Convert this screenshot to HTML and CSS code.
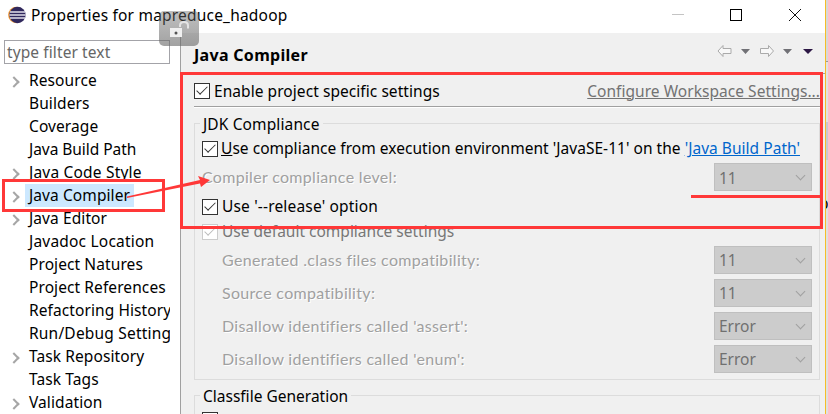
FILE: index.html
```html
<!DOCTYPE html>
<html lang="en">
<head>
<meta charset="utf-8">
<title>Properties for mapreduce_hadoop</title>
<link rel="stylesheet" href="styles.css">
</head>
<body>
<div class="screen">
  <div class="window">
    <header class="titlebar">
      <svg class="logo" width="18" height="18" viewBox="0 0 18 18"><circle cx="8.3" cy="9" r="8.2" fill="#f29a38"/><circle cx="9.5" cy="9" r="8.2" fill="#30285d"/><path d="M2 6h15M1.4 9h16.3M2 12h15" stroke="#e2e0ec" stroke-width="1.5"/></svg>
      <h1 class="title">Properties for mapreduce_hadoop</h1>
      <svg class="controls" width="136" height="14" viewBox="0 0 136 14" fill="none" shape-rendering="crispEdges"><path d="M2 6.5h12" stroke="#c4c4c4"/><path d="M60.500 1.500h11v11h-11z" stroke="#000"/><path d="M119 1l12 12M131 1l-12 12" stroke="#111" shape-rendering="auto"/></svg>
    </header>
    <div class="content">
      <aside class="sidebar">
        <div class="filter">type filter text</div>
        <ul class="tree">
          <li class="parent"><span>Resource</span></li>
          <li><span>Builders</span></li>
          <li><span>Coverage</span></li>
          <li><span class="tight">Java Build Path</span></li>
          <li class="parent"><span class="wide">Java Code Style</span></li>
          <li class="parent selected"><span>Java Compiler</span></li>
          <li class="parent"><span>Java Editor</span></li>
          <li><span class="wide">Javadoc Location</span></li>
          <li><span>Project Natures</span></li>
          <li><span>Project References</span></li>
          <li><span>Refactoring History</span></li>
          <li><span class="wide">Run/Debug Settings</span></li>
          <li class="parent"><span>Task Repository</span></li>
          <li><span>Task Tags</span></li>
          <li class="parent"><span>Validation</span></li>
        </ul>
      </aside>
      <main class="page">
        <div class="page-head">
          <h2>Java Compiler</h2>
          <svg width="98" height="14" viewBox="0 0 98 14"><g fill="#f8f8f8" stroke="#aaa"><path d="M1 7l5-5.500v3h8v5H6v3z"/><path d="M56.500 7l-5-5.500v3h-8v5h8v3z"/></g><path d="M24 5h9l-4.500 5zM66 5h9l-4.500 5z" fill="#717176"/><path d="M86 5h10l-5 5z" fill="#2c1744"/></svg>
        </div>
        <div class="enable-row">
          <i class="check"></i><span class="enable">Enable project specific settings</span>
          <a class="workspace">Configure Workspace Settings...</a>
        </div>
        <fieldset class="group jdk">
          <legend>JDK Compliance</legend>
          <div class="row env"><i class="check"></i><span class="env-text"><u>U</u>se compliance from execution environment 'JavaSE-11' on the <a>'Java Build Path'</a></span></div>
          <div class="row level"><span class="off">Compiler compliance level:</span><span class="combo">11</span></div>
          <div class="row release"><i class="check"></i><span class="release-text">Use '--release' option</span></div>
          <div class="row default"><i class="check disabled"></i><span class="default-text">Use default compliance settings</span></div>
          <div class="row sub"><span class="off">Generated .class files compatibility:</span><span class="combo">11</span></div>
          <div class="row sub"><span class="off">Source compatibility:</span><span class="combo">11</span></div>
          <div class="row sub"><span class="off">Disallow identifiers called 'assert':</span><span class="combo">Error</span></div>
          <div class="row sub"><span class="off">Disallow identifiers called 'enum':</span><span class="combo">Error</span></div>
        </fieldset>
        <fieldset class="group classfile">
          <legend>Classfile Generation</legend>
          <i class="check"></i>
        </fieldset>
      </main>
    </div>
  </div>
  <div class="behind"><span>p</span></div>
  <div class="lock"><svg width="40" height="35" viewBox="0 0 40 35"><path d="M11 17h12v9H11z" fill="#f0f0f0"/><path d="M21 16v-1.500q0-3.500 4-3.500t4 3.500v3" fill="none" stroke="#e4e4e4" stroke-width="2"/><circle cx="17" cy="22" r="1.500" fill="#555"/></svg></div>
  <svg class="marks" width="828" height="414" viewBox="0 0 828 414" fill="none" stroke="#ff3838" stroke-width="3"><path d="M181.500 73.500h640v154h-640zM691 196.500h130M3.500 180.500h160v30h-160z"/><path d="M127 196.600L200 180l-2-4 12 4-9 7-1-3.500L127 198z" fill="#ff3838" stroke="none"/></svg>
</div>
</body>
</html>
```
FILE: styles.css
```css
* { box-sizing: border-box; }
body { margin: 0; overflow: hidden; color: #000; font: 15.5px/23px "Noto Sans", "Open Sans", sans-serif; }
.screen { position: relative; display: flex; width: 828px; height: 414px; overflow: hidden; background: #fff; }
.window { width: 826px; height: 414px; border-right: 1px solid #f5bd28; flex: none; }
.titlebar { display: flex; align-items: center; height: 33px; padding: 0 19px 4px 8px; }
.logo { flex: none; margin-right: 5px; }
.title { margin: 0; padding-top: 1px; font-size: 15.5px; font-weight: 400; letter-spacing: .2px; white-space: nowrap; }
.controls { margin-left: auto; }
.content { display: flex; height: 381px; }
.sidebar { width: 181px; flex: none; border-right: 1px solid #a0a0a0; padding: 7px 10px 0 4px; }
.filter { height: 24px; border: 1px solid #a3a3a8; padding-left: 2px; color: #666; line-height: 23px; letter-spacing: .1px; white-space: nowrap; }
.tree { list-style: none; margin: 5px 0 0; padding: 0; width: 166px; letter-spacing: .09px; }
.tree li { display: flex; align-items: center; height: 23px; padding-left: 21px; overflow: hidden; white-space: nowrap; }
.tree li span { padding: 0 4px; line-height: 23px; height: 23px; }
.tree .wide { letter-spacing: .2px; }
.tree .tight { letter-spacing: -.05px; }
.parent::before { content: ""; box-sizing: border-box; flex: none; width: 8px; height: 8px; margin: 2px 4px 0 -12px; border: solid #a6a6a6; border-width: 2px 2px 0 0; transform: translateX(-3px) rotate(45deg); }
.tree .selected span { background: #cce8ff; width: 109px; }
.page { flex: 1; background: #f0f0f0; padding: 0 5px 0 13px; min-width: 0; }
.page-head { display: flex; align-items: center; justify-content: space-between; height: 41px; margin: 0 -5px 0 -13px; padding: 0 10px 0 13px; border-bottom: 1px solid #a0a0a0; }
.page-head h2 { margin: 4px 0 0; font-size: 16px; font-weight: 700; letter-spacing: .3px; }
.page-head svg { margin-bottom: 4px; }
.enable-row { display: flex; align-items: center; height: 34px; padding-top: 1px; border-bottom: 1px solid #fff; box-shadow: inset 0 -1px #a0a0a0; }
.enable { margin-left: 4px; letter-spacing: .06px; }
.workspace { margin-left: auto; color: #737373; text-decoration: underline; letter-spacing: .04px; white-space: nowrap; }
.check { display: block; flex: none; width: 16px; height: 16px; border: 1px solid #333; background: #fff; }
.check::after { content: ""; display: block; width: 11px; height: 5px; margin: 2px 0 0 1px; border: solid #333; border-width: 0 0 1.500px 1.500px; transform: rotate(-45deg) scale(.9); }
.check.disabled { border-color: #ccc; }
.check.disabled::after { border-color: #bbb; }
.group { position: relative; margin: 4px 0 0; padding: 0 7px; border: 1px solid #dcdcdc; min-width: 0; }
.group legend { margin-left: -2px; padding: 0 3px; height: 23px; line-height: 24px; }
.jdk { height: 268px; }
.jdk legend { letter-spacing: .12px; }
.row { display: flex; align-items: center; white-space: nowrap; }
.row .combo { margin-left: auto; }
.env { height: 27px; }
.env-text { margin-left: 3px; letter-spacing: .03px; }
.env a { color: #0066cc; text-decoration: underline; }
.level { height: 30px; }
.level .off { margin-bottom: 2px; }
.release { height: 29px; }
.release-text { margin-left: 4px; letter-spacing: .17px; }
.default { height: 22px; }
.default .check { margin-bottom: 1px; }
.default-text { margin: 0 0 2px 4px; color: #777; }
.sub { height: 33px; padding-left: 20px; }
.off { color: #a0a0a0; font-family: Lato, sans-serif; font-size: 16px; letter-spacing: .31px; text-shadow: 1px 1px #fff; font-variant-ligatures: none; }
.combo { display: flex; align-items: center; justify-content: space-between; width: 98px; height: 28px; padding: 2px 6px 0 4px; border: 1px solid #bfbfbf; background: #ccc; color: #707070; }
.combo::after { content: ""; width: 6px; height: 6px; margin: -5px 1px 0 0; border: solid #a0a0a0; border-width: 0 1px 1px 0; transform: rotate(45deg); }
.classfile { height: 60px; }
.classfile .check { margin-top: 5px; }
.behind { flex: 1; background: linear-gradient(#d8d8d8 61px, #999 61px 62px, #e2e2e2 62px 122px, #c8c8d2 122px 160px, #d9d9d9 160px 190px, #e0e0e0 190px); overflow: hidden; }
.behind span { display: block; margin: 192px 0 0 -7px; }
.lock { position: absolute; left: 159px; top: 11px; width: 40px; height: 35px; border-radius: 5px; background: linear-gradient(rgba(105,105,105,.42), rgba(105,105,105,.62)); }
.marks { position: absolute; inset: 0; }
```
